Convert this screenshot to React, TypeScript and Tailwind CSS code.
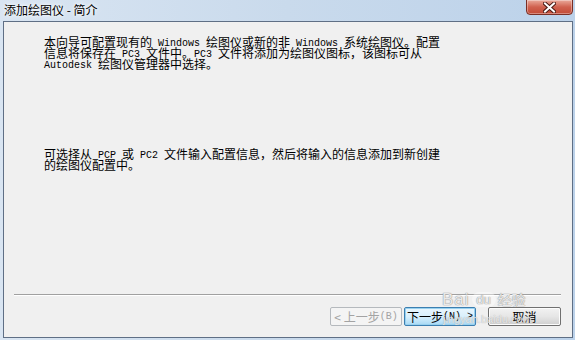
import { ReactNode } from 'react';

const cjk = "font-['Noto_Sans_CJK_SC',sans-serif]";

// SimSun-style half width latin: mono at 10px gives 6px per char
function L({ children }: { children: ReactNode }) {
  return <span className="font-['Liberation_Mono',monospace] text-[10px] align-[1px] whitespace-pre">{children}</span>;
}

function Line({ children }: { children: ReactNode }) {
  return <div className="h-[11px] leading-[11px] whitespace-nowrap">{children}</div>;
}

export default function App() {
  return (
    <div className={`w-[575px] h-[340px] flex flex-col bg-gradient-to-r from-[#d9e5f2] via-[#c9daec] to-[#bcd2ea] overflow-hidden relative ${cjk}`}>
      {/* Title bar */}
      <div className="h-[21px] flex items-start justify-between">
        <div className="pl-[4px] pt-[3px] text-[12px] leading-[14px] text-black [text-shadow:0_0_6px_#ffffff,0_0_3px_#ffffff]">
          添加绘图仪 - 简介
        </div>
        <div className="mr-[2px] -mt-[1px] w-[47px] h-[16px] rounded-b-[4px] border border-[#7a2f25] bg-gradient-to-b from-[#e9a99b] via-[#d0614f] to-[#c24a36] flex items-center justify-center shadow-[inset_0_0_0_1px_rgba(255,255,255,0.35)]">
          <svg width="13" height="11" viewBox="0 0 13 11">
            <path d="M2 1.5 L11 9.5 M11 1.5 L2 9.5" stroke="#4a1a14" strokeWidth="4" strokeLinecap="square" />
            <path d="M2 1.5 L11 9.5 M11 1.5 L2 9.5" stroke="#ffffff" strokeWidth="2" strokeLinecap="square" />
          </svg>
        </div>
      </div>

      {/* Client panel */}
      <div className="flex-1 ml-[3px] mr-[2px] mb-[2px] border border-[#5f6f85] bg-[#f0f0f0] flex flex-col">
        <div className="pl-[40px] pt-[14px] text-[12px] text-black">
          <Line>本向导可配置现有的<L> Windows </L>绘图仪或新的非<L> Windows </L>系统绘图仪。配置</Line>
          <Line>信息将保存在<L> PC3 </L>文件中。<L>PC3 </L>文件将添加为绘图仪图标，该图标可从</Line>
          <Line><L>Autodesk </L>绘图仪管理器中选择。</Line>

          <div className="mt-[79px]">
            <Line>可选择从<L> PCP </L>或<L> PC2 </L>文件输入配置信息，然后将输入的信息添加到新创建</Line>
            <Line>的绘图仪配置中。</Line>
          </div>
        </div>

        <div className="flex-1" />

        <div className="ml-[10px] mr-[11px] h-[2px] border-t border-[#a0a0a0] border-b border-b-white" />

        <div className="mt-[11px] mb-[11px] mr-[11px] flex justify-end text-[12px] leading-[17px]">
          <div className="w-[72px] h-[19px] border border-[#b5b9bd] rounded-[2px] bg-[#f4f4f4] text-[#a3a3a3] flex items-center justify-center whitespace-nowrap">
            &lt; 上一步<L>(B)</L>
          </div>
          <div className="ml-[2px] w-[72px] h-[19px] border border-[#3c7fb1] rounded-[2px] bg-gradient-to-b from-[#eaf6fd] via-[#d9f0fc] to-[#a7d9f5] shadow-[inset_0_0_0_1px_#98d1ef] text-black flex items-center justify-center whitespace-nowrap">
            下一步<L>(N) &gt;</L>
          </div>
          <div className="ml-[12px] w-[73px] h-[19px] border border-[#707070] rounded-[2px] bg-gradient-to-b from-[#f2f2f2] via-[#e6e6e6] to-[#cfcfcf] shadow-[inset_0_0_0_1px_#fcfcfc] text-black flex items-center justify-center">
            取消
          </div>
        </div>
      </div>

      {/* watermark */}
      <div className="absolute left-[442px] top-[291px] flex items-center text-white/80 text-[17px] leading-[17px] font-['Liberation_Sans',sans-serif] [text-shadow:0_0_1px_#8f8f8f,0_0_1px_#8f8f8f] pointer-events-none">
        <span className="tracking-[1px]">Bai</span>
        <span className="ml-[2px] w-[24px] h-[15px] rounded-full bg-white/40 text-[13px] leading-[15px] text-center">du</span>
        <span className={`${cjk} ml-[2px] text-[14px]`}>经验</span>
      </div>
      <div className="absolute left-[443px] top-[313px] text-white/70 text-[11px] leading-[12px] font-['Liberation_Sans',sans-serif] [text-shadow:0_0_1px_#9a9a9a] pointer-events-none">
        jingyan.baidu.com
      </div>
    </div>
  );
}
